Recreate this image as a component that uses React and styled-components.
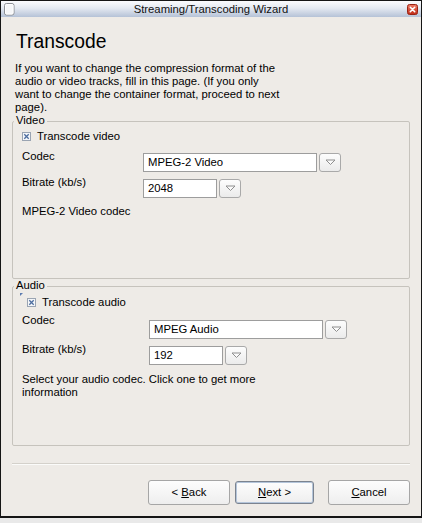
import React from "react";
import styled, { createGlobalStyle } from "styled-components";

const GlobalStyle = createGlobalStyle`
  html, body { margin: 0; padding: 0; background: #e9e9e9; }
  body { font-family: "Liberation Sans", Arial, sans-serif; font-size: 11.3px; color: #000; }
  * { box-sizing: border-box; }
`;

const Window = styled.div`
  width: 422px;
  height: 518px;
  border: 1px solid #151515;
  border-bottom-width: 2px;
  background: #eeebe7;
  display: flex;
  flex-direction: column;
`;

const TitleBar = styled.div`
  height: 16px;
  flex: none;
  display: grid;
  grid-template-columns: 18px 1fr 18px;
  align-items: center;
  padding: 0 2px;
  background: linear-gradient(#fbfbfd 0%, #e4e9f1 45%, #b5c2d7 100%);
`;

const TitleText = styled.div`
  text-align: center;
  font-size: 11.3px;
  line-height: 16px;
  color: #111;
`;

const CloseWrap = styled.div`
  display: flex;
  justify-content: flex-end;
  padding-right: 1px;
`;

const Content = styled.div`
  flex: 1;
  display: flex;
  flex-direction: column;
  padding: 14px 11px 0 11px;
`;

const Heading = styled.h1`
  margin: 0 0 0 4px;
  font-size: 19.3px;
  font-weight: normal;
  line-height: 22px;
`;

const Intro = styled.p`
  margin: 9px 0 0 3px;
  width: 265px;
  line-height: 13px;
`;

const Group = styled.fieldset`
  margin: 0;
  padding: 0;
  height: ${(p) => p.$h}px;
  border: 1px solid #c6c3bd;
  border-radius: 2px;
  min-width: 0;
`;

const Legend = styled.legend`
  margin-left: 1px;
  padding: 0 2px 2px;
  line-height: 13px;
`;

const CheckRow = styled.label`
  position: relative;
  display: flex;
  align-items: center;
  gap: 6px;
  height: 13px;
  line-height: 13px;
  margin-top: ${(p) => p.$top}px;
  padding-left: ${(p) => p.$indent}px;
`;

const FocusMark = styled.span`
  position: absolute;
  left: 7px;
  top: -3px;
  width: 0;
  height: 0;
  border-top: 3px solid #5a7bb0;
  border-right: 3px solid transparent;
`;

const FormRow = styled.div`
  display: flex;
  align-items: flex-start;
  padding-left: 9px;
  margin-top: ${(p) => p.$top}px;
`;

const FieldLabel = styled.div`
  width: ${(p) => p.$w}px;
  flex: none;
  line-height: 13px;
  margin-top: ${(p) => p.$offset}px;
`;

const Field = styled.div`
  width: ${(p) => p.$w}px;
  height: 19px;
  border: 1px solid #9d9d9d;
  background: #fff;
  padding: 0 4px;
  line-height: 17px;
  white-space: nowrap;
`;

const DropButton = styled.div`
  width: 22px;
  height: 19px;
  margin-left: 2px;
  border: 1px solid #a9a9a9;
  border-radius: 3px;
  background: linear-gradient(#fdfdfd, #ebebeb);
  display: flex;
  align-items: center;
  justify-content: center;
`;

const Description = styled.div`
  padding-left: 9px;
  margin-top: ${(p) => p.$top}px;
  width: ${(p) => p.$w}px;
  line-height: 13px;
`;

const Separator = styled.div`
  margin-top: 17px;
  height: 2px;
  border-top: 1px solid #d4d1cb;
  border-bottom: 1px solid #fbfbfa;
`;

const ButtonRow = styled.div`
  display: flex;
  justify-content: flex-end;
  align-items: center;
  margin-top: 15px;
  height: 25px;
`;

const Button = styled.button`
  width: ${(p) => p.$w}px;
  height: ${(p) => (p.$default ? 23 : 25)}px;
  margin-left: ${(p) => p.$gap}px;
  padding: 0;
  font-family: "Liberation Sans", Arial, sans-serif;
  font-size: 11.3px;
  line-height: 13px;
  color: #000;
  border-radius: 3px;
  border: 1px solid ${(p) => (p.$default ? "#7b838f" : "#a6a6a6")};
  box-shadow: ${(p) => (p.$default ? "inset 0 0 0 1px #b4c5da" : "none")};
  background: linear-gradient(#fdfdfd, #eeeeee);
  text-align: center;
  u { text-decoration: underline; text-underline-offset: 1px; }
`;

const MenuIcon = () => (
  <svg width="12" height="14" viewBox="0 0 12 14">
    <rect x="1.5" y="1.5" width="9.5" height="11.5" rx="2" fill="#f6f7f9" stroke="#8c8f95" />
    <rect x="2.5" y="2.5" width="7.5" height="9.5" rx="1" fill="none" stroke="#ffffff" />
  </svg>
);

const CloseIcon = () => (
  <svg width="11" height="11" viewBox="0 0 11 11">
    <defs>
      <linearGradient id="cl" x1="0" y1="0" x2="0" y2="1">
        <stop offset="0" stopColor="#ee7b66" />
        <stop offset="1" stopColor="#c02a16" />
      </linearGradient>
    </defs>
    <rect x="0.5" y="0.5" width="10" height="10" rx="2" fill="url(#cl)" stroke="#9a2414" />
    <path d="M3.3 3.3 L7.7 7.7 M7.7 3.3 L3.3 7.7" stroke="#fff" strokeWidth="1.6" strokeLinecap="round" />
  </svg>
);

const CheckIcon = () => (
  <svg width="9" height="9" viewBox="0 0 9 9">
    <rect x="0.5" y="0.5" width="8" height="8" fill="#f4f6f9" stroke="#9aa4b2" />
    <path d="M2.3 2.3 L6.7 6.7 M6.7 2.3 L2.3 6.7" stroke="#4d6d9f" strokeWidth="1.3" />
  </svg>
);

const Arrow = () => (
  <svg width="11" height="7" viewBox="0 0 11 7">
    <path d="M1 1 L10 1 L5.5 5.5 Z" fill="#fbfbfb" stroke="#8e8e8e" strokeWidth="1" strokeLinejoin="round" />
  </svg>
);

const Combo = ({ w, value }) => (
  <>
    <Field $w={w}>{value}</Field>
    <DropButton>
      <Arrow />
    </DropButton>
  </>
);

export default function App() {
  return (
    <>
      <GlobalStyle />
      <Window>
        <TitleBar>
          <MenuIcon />
          <TitleText>Streaming/Transcoding Wizard</TitleText>
          <CloseWrap>
            <CloseIcon />
          </CloseWrap>
        </TitleBar>
        <Content>
          <Heading>Transcode</Heading>
          <Intro>
            If you want to change the compression format of the audio or video tracks, fill in
            this page. (If you only want to change the container format, proceed to next page).
          </Intro>

          <Group $h={165}>
            <Legend>Video</Legend>
            <CheckRow $top={1} $indent={9}>
              <CheckIcon />
              Transcode video
            </CheckRow>
            <FormRow $top={10}>
              <FieldLabel $w={121} $offset={-3}>Codec</FieldLabel>
              <Combo w={174} value="MPEG-2 Video" />
            </FormRow>
            <FormRow $top={7}>
              <FieldLabel $w={121} $offset={-3}>Bitrate (kb/s)</FieldLabel>
              <Combo w={74} value="2048" />
            </FormRow>
            <Description $top={7} $w={300}>MPEG-2 Video codec</Description>
          </Group>

          <Group $h={167}>
            <Legend>Audio</Legend>
            <CheckRow $top={2} $indent={14}>
              <FocusMark />
              <CheckIcon />
              Transcode audio
            </CheckRow>
            <FormRow $top={11}>
              <FieldLabel $w={127} $offset={-6}>Codec</FieldLabel>
              <Combo w={174} value="MPEG Audio" />
            </FormRow>
            <FormRow $top={7}>
              <FieldLabel $w={127} $offset={-3}>Bitrate (kb/s)</FieldLabel>
              <Combo w={74} value="192" />
            </FormRow>
            <Description $top={8} $w={270}>
              Select your audio codec. Click one to get more information
            </Description>
          </Group>

          <Separator />
          <ButtonRow>
            <Button $w={82} $gap={0}>
              &lt; <u>B</u>ack
            </Button>
            <Button $w={79} $gap={5} $default>
              <u>N</u>ext &gt;
            </Button>
            <Button $w={82} $gap={14}>
              <u>C</u>ancel
            </Button>
          </ButtonRow>
        </Content>
      </Window>
    </>
  );
}
